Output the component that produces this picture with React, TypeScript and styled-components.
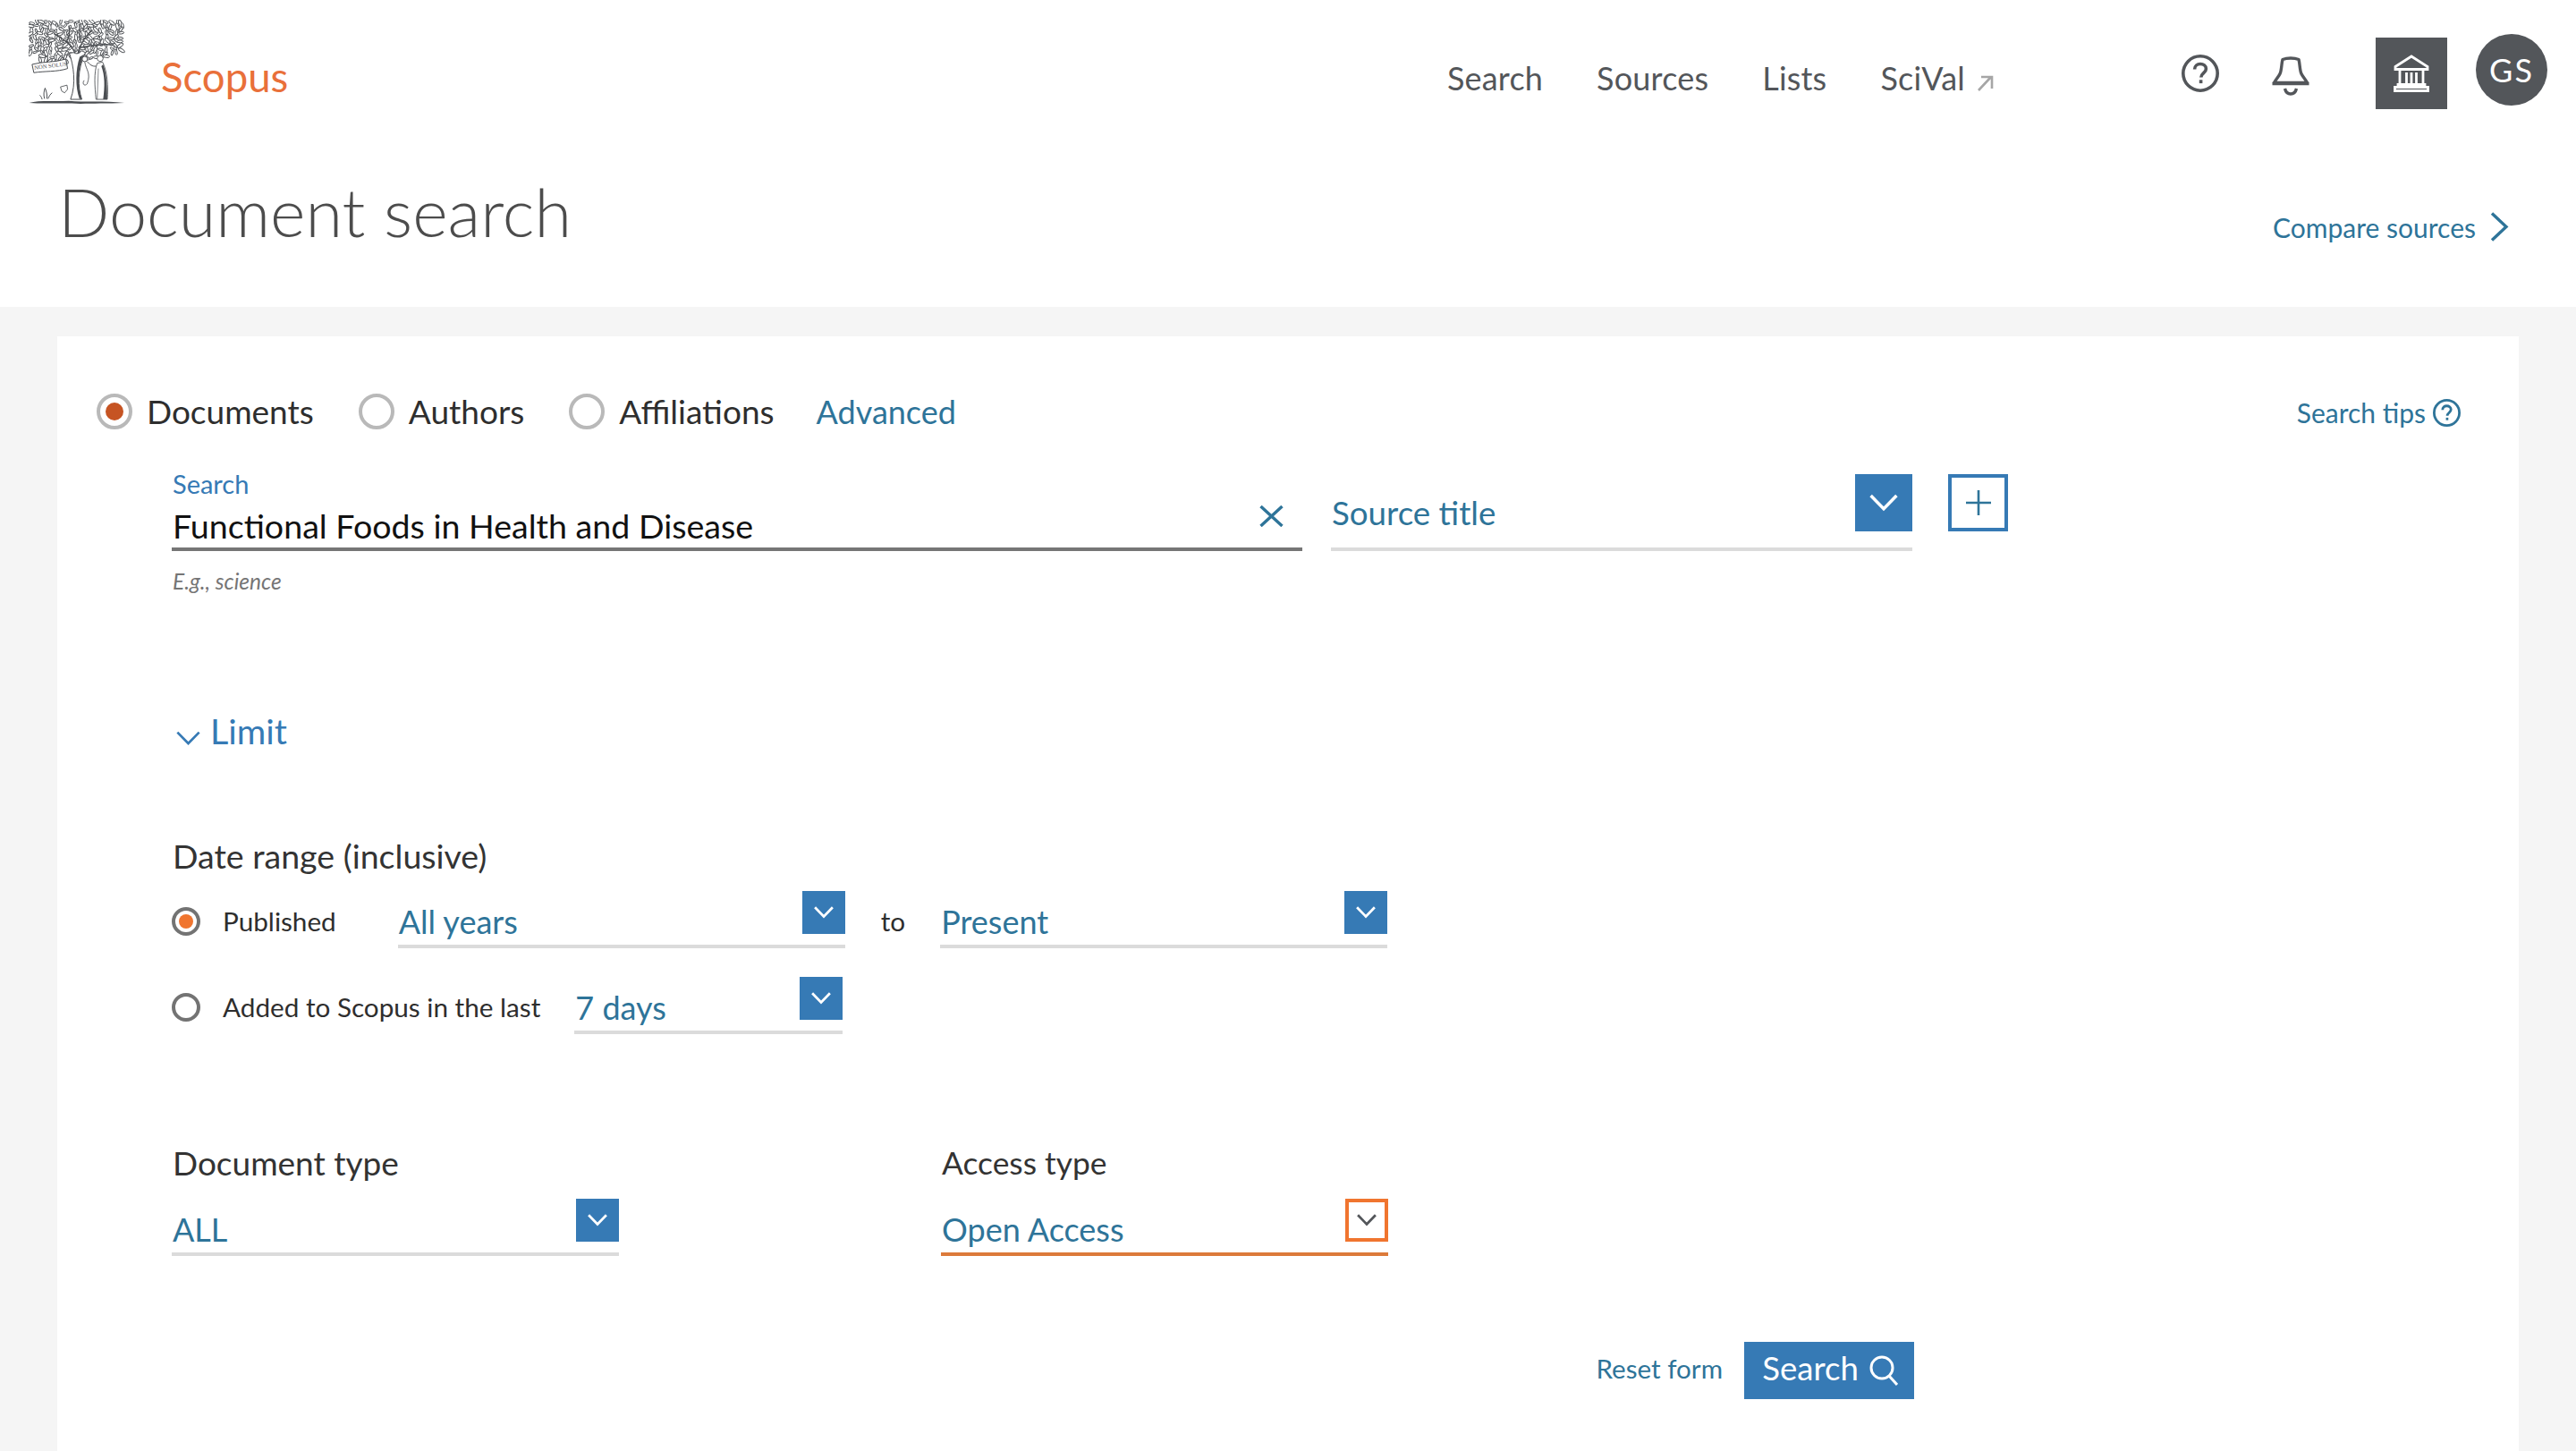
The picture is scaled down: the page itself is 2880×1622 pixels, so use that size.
import React from "react";
import styled, { createGlobalStyle } from "styled-components";

const GlobalStyle = createGlobalStyle`
  html, body { margin: 0; padding: 0; background: #f5f5f5; }
  * { box-sizing: border-box; }
  body { font-family: "Lato", "Open Sans", sans-serif; color: #2e2e2e; }
`;

const BLUE = "#367ab5";
const LINK = "#2e7499";
const ORANGE = "#f0752f";
const GREY = "#53565a";

const Page = styled.div`
  width: 2880px;
  height: 1622px;
  overflow: hidden;
  display: flex;
  flex-direction: column;
`;
const Head = styled.header`
  background: #fff;
  height: 343px;
  flex: none;
`;
const TopBar = styled.div`
  height: 160px;
  display: flex;
  align-items: flex-start;
  padding-left: 32px;
`;
const LogoSlot = styled.div`
  margin-top: 22px;
  width: 108px;
  height: 96px;
  flex: none;
`;
const Brand = styled.a`
  margin: 63px 0 0 40px;
  font-size: 45.5px;
  line-height: 46px;
  font-weight: 400;
  color: #e9703a;
`;
const Nav = styled.nav`
  margin: 69px 0 0 auto;
  display: flex;
  gap: 60px;
`;
const NavItem = styled.a`
  font-size: 36px;
  line-height: 36px;
  letter-spacing: 0.2px;
  color: ${GREY};
  display: flex;
  align-items: flex-start;
  gap: 13px;
`;
const HeadIcon = styled.span<{ $left: number; $top: number }>`
  margin: ${(p) => p.$top}px 0 0 ${(p) => p.$left}px;
  display: block;
  flex: none;
  line-height: 0;
`;
const InstBox = styled.div`
  margin: 42px 0 0 74px;
  width: 80px;
  height: 80px;
  background: ${GREY};
  display: flex;
  align-items: center;
  justify-content: center;
  flex: none;
`;
const Avatar = styled.div`
  margin: 38px 32px 0 32px;
  width: 80px;
  height: 80px;
  border-radius: 50%;
  background: ${GREY};
  color: #fff;
  font-size: 36px;
  letter-spacing: 2px;
  display: flex;
  align-items: center;
  justify-content: center;
  flex: none;
`;
const TitleRow = styled.div`
  display: flex;
  justify-content: space-between;
  align-items: flex-start;
  padding: 0 75px 0 65px;
`;
const Title = styled.h1`
  margin: 38px 0 0;
  font-size: 75.6px;
  line-height: 76px;
  font-weight: 300;
  color: #4c4c4c;
`;
const Compare = styled.a`
  margin-top: 79px;
  font-size: 30px;
  line-height: 31px;
  color: ${LINK};
  display: flex;
  align-items: flex-start;
  gap: 16px;
`;
const Panel = styled.main`
  flex: 1;
  margin: 33px 64px 0;
  background: #fff;
  padding: 64px 65px 0 44px;
`;
const Tabs = styled.div`
  display: flex;
  align-items: center;
  height: 40px;
`;
const TabRadio = styled.span<{ $on?: boolean }>`
  width: 40px;
  height: 40px;
  border-radius: 50%;
  border: 4px solid #b9b9b9;
  display: flex;
  align-items: center;
  justify-content: center;
  flex: none;
  &::after {
    content: "";
    width: 20px;
    height: 20px;
    border-radius: 50%;
    background: ${(p) => (p.$on ? "#c65423" : "transparent")};
  }
`;
const TabLabel = styled.span`
  margin: 0 50px 0 16px;
  font-size: 37px;
  line-height: 40px;
  color: #2e2e2e;
`;
const LinkLarge = styled.a`
  margin-left: -3px;
  font-size: 36px;
  line-height: 40px;
  color: ${LINK};
`;
const Tips = styled.a`
  margin-left: auto;
  padding-top: 2px;
  display: flex;
  align-items: center;
  gap: 8px;
  font-size: 30px;
  line-height: 40px;
  color: ${LINK};
`;
const Form = styled.div`
  margin-left: 84px;
`;
const SearchRow = styled.div`
  margin-top: 50px;
  display: flex;
  align-items: flex-start;
`;
const MainField = styled.div`
  width: 1264px;
  height: 86px;
  border-bottom: 4px solid #767676;
`;
const FieldLabel = styled.label`
  display: block;
  padding-left: 1px;
  font-size: 29px;
  line-height: 22px;
  color: ${BLUE};
`;
const ValueRow = styled.div`
  margin-top: 9px;
  padding-left: 1px;
  display: flex;
  justify-content: space-between;
  align-items: flex-start;
`;
const InputValue = styled.span`
  margin-top: 2px;
  font-size: 37.6px;
  line-height: 49px;
  color: #111;
`;
const ClearIcon = styled.span`
  margin: 4px 21px 0 0;
  line-height: 0;
`;
const Select = styled.div<{ $w: number; $tall?: boolean; $accent?: boolean }>`
  width: ${(p) => p.$w}px;
  height: ${(p) => (p.$tall ? 86 : 64)}px;
  border-bottom: 4px solid ${(p) => (p.$accent ? "#dc7a3a" : "#dbdbdb")};
  display: flex;
  justify-content: space-between;
  align-items: flex-start;
  flex: none;
`;
const SelectValue = styled.span<{ $tall?: boolean }>`
  margin-top: ${(p) => (p.$tall ? 25 : 16)}px;
  padding-left: 1px;
  font-size: ${(p) => (p.$tall ? 36.7 : 36)}px;
  line-height: 36px;
  color: ${LINK};
`;
const DropButton = styled.span<{ $big?: boolean; $focus?: boolean }>`
  width: ${(p) => (p.$big ? 64 : 48)}px;
  height: ${(p) => (p.$big ? 64 : 48)}px;
  background: ${(p) => (p.$focus ? "#fff" : BLUE)};
  border: ${(p) => (p.$focus ? `4px solid ${ORANGE}` : "none")};
  display: flex;
  align-items: center;
  justify-content: center;
  flex: none;
`;
const SourceSlot = styled.div`
  margin-left: 32px;
`;
const PlusBox = styled.span`
  margin-left: 40px;
  width: 67px;
  height: 64px;
  border: 4px solid ${BLUE};
  display: flex;
  align-items: center;
  justify-content: center;
  flex: none;
`;
const Hint = styled.div`
  margin-top: 23px;
  padding-left: 1px;
  font-size: 24.5px;
  line-height: 22px;
  font-style: italic;
  color: #757575;
`;
const LimitToggle = styled.a`
  margin-top: 138px;
  padding-left: 5px;
  display: flex;
  align-items: flex-start;
  gap: 11px;
  font-size: 39.5px;
  line-height: 36px;
  color: ${BLUE};
`;
const LimitChevron = styled.span`
  margin-top: 18px;
  line-height: 0;
`;
const SectionLabel = styled.div<{ $top: number; $size: number }>`
  margin-top: ${(p) => p.$top}px;
  padding-left: 1px;
  font-size: ${(p) => p.$size}px;
  line-height: 34px;
  color: #333;
`;
const DateRow = styled.div<{ $top: number }>`
  margin-top: ${(p) => p.$top}px;
  display: flex;
  align-items: flex-start;
`;
const SmallRadio = styled.span<{ $on?: boolean }>`
  margin-top: 18px;
  width: 32px;
  height: 32px;
  border-radius: 50%;
  border: 4px solid #737373;
  display: flex;
  align-items: center;
  justify-content: center;
  flex: none;
  &::after {
    content: "";
    width: 16px;
    height: 16px;
    border-radius: 50%;
    background: ${(p) => (p.$on ? ORANGE : "transparent")};
  }
`;
const DateText = styled.span<{ $after: number; $before?: number }>`
  margin: 18px ${(p) => p.$after}px 0 ${(p) => p.$before ?? 25}px;
  font-size: 29.7px;
  line-height: 32px;
  color: #2e2e2e;
`;
const TypeGrid = styled.div`
  margin-top: 127px;
  display: grid;
  grid-template-columns: 500px 500px;
  column-gap: 360px;
  width: 1360px;
`;
const TypeCell = styled.div``;
const TypeSelect = styled.div`
  margin-top: 23px;
`;
const Actions = styled.div`
  margin-top: 96px;
  width: 1948px;
  display: flex;
  justify-content: flex-end;
  align-items: center;
  gap: 24px;
`;
const ResetLink = styled.a`
  font-size: 29.6px;
  line-height: 60px;
  margin-bottom: 4px;
  color: ${LINK};
`;
const SubmitButton = styled.button`
  width: 190px;
  height: 64px;
  border: 0;
  padding: 0;
  background: ${BLUE};
  color: #fff;
  font-family: inherit;
  font-size: 36.6px;
  display: flex;
  align-items: center;
  justify-content: center;
  gap: 12px;
`;
const SubmitLabel = styled.span`
  margin: -6px 0 0 2px;
`;

const Chevron = ({ size = 22, color = "#fff", sw = 2.5 }: { size?: number; color?: string; sw?: number }) => (
  <svg width={size} height={size * 0.6} viewBox="0 0 20 12" fill="none">
    <path d="M1 1.2 L10 10.4 L19 1.2" stroke={color} strokeWidth={sw} />
  </svg>
);

const HelpIcon = ({ size, color, sw }: { size: number; color: string; sw: number }) => (
  <svg width={size} height={size} viewBox="0 0 42 42" fill="none">
    <circle cx="21" cy="21" r={21 - sw / 2} stroke={color} strokeWidth={sw} />
    <path d="M14.6 16.5c0-4 3-6 6.4-6s6.4 2 6.4 5.4c0 4.6-5.6 4.8-5.6 9.6" stroke={color} strokeWidth={sw} />
    <rect x="19.8" y="28.3" width="3.6" height="3.8" fill={color} />
  </svg>
);

const BellIcon = () => (
  <svg width="42" height="44" viewBox="0 0 42 44" fill="none">
    <path
      d="M12 3.500c5-2 13-2 18 0 1.400 5 1 12 3 16 1.400 3 4.500 6 6.500 10H2.500c2-4 5.100-7 6.500-10 2-4 1.600-11 3-16Z"
      stroke={GREY}
      strokeWidth="3.400"
      strokeLinejoin="round"
    />
    <path d="M0.500 30.500h41" stroke={GREY} strokeWidth="3.600" />
    <path d="M14.500 36c1 4 3.500 6 6.500 6s5.500-2 6.500-6" stroke={GREY} strokeWidth="3.400" />
  </svg>
);

const InstitutionIcon = () => (
  <svg width="40" height="42" viewBox="0 0 40 42" fill="none" stroke="#fff" strokeWidth="2.800">
    <path d="M2 13.500 20 2l18 11.500v3H2Z" />
    <path d="M7 16.500v17M14.500 20v13.500M20 20v13.500M25.500 20v13.500M33 16.500v17" />
    <path d="M5 33.500h30v3H5ZM1.500 36.500h37v4h-37Z" />
  </svg>
);

const ExternalArrow = () => (
  <svg width="20" height="18" viewBox="0 0 20 18" fill="none" stroke="#a6a6a6" strokeWidth="2.600" style={{ marginTop: 15 }}>
    <path d="M2 17 16 2M5 2h12v13" />
  </svg>
);

const RightChevron = () => (
  <svg width="21" height="33" viewBox="0 0 21 33" fill="none" style={{ marginTop: -2 }}>
    <path d="M2 1.500 18 16.500 2 31.500" stroke={LINK} strokeWidth="3.400" />
  </svg>
);

const CrossIcon = () => (
  <svg width="27" height="24" viewBox="0 0 27 24" fill="none">
    <path d="M1.500 1 25.500 23M25.500 1 1.500 23" stroke={LINK} strokeWidth="3.400" />
  </svg>
);

const PlusIcon = () => (
  <svg width="28" height="28" viewBox="0 0 28 28" fill="none">
    <path d="M14 0v28M0 14h28" stroke={LINK} strokeWidth="2.600" />
  </svg>
);

const SearchGlyph = () => (
  <svg width="32" height="36" viewBox="0 0 32 36" fill="none" stroke="#fff" strokeWidth="3">
    <circle cx="14" cy="15" r="12" />
    <path d="M22 24 31 34" />
  </svg>
);

// A deterministic scatter of small leaves that reads as the engraved tree.
const leaves = (() => {
  const out: { x: number; y: number; r: number; l: number }[] = [];
  let seed = 17;
  const rnd = () => {
    seed = (seed * 9301 + 49297) % 233280;
    return seed / 233280;
  };
  for (let y = 44; y <= 176; y += 13) {
    for (let x = 42; x <= 356; x += 17) {
      const px = x + (rnd() - 0.5) * 9;
      const py = y + (rnd() - 0.5) * 8;
      if (py > 148 && (px < 70 || px > 300)) continue;
      if (py > 165 && px > 170) continue;
      out.push({ x: px, y: py, r: rnd() * 180, l: 7 + rnd() * 5 });
    }
  }
  return out;
})();

const TreeLogo = () => (
  <svg width="108" height="96" viewBox="35 35 325 290" fill="none">
    {leaves.map((f, i) => (
      <ellipse
        key={i}
        cx={f.x}
        cy={f.y}
        rx={f.l}
        ry={f.l * 0.42}
        transform={`rotate(${f.r} ${f.x} ${f.y})`}
        fill="#fff"
        stroke="#4b4e52"
        strokeWidth="2.800"
      />
    ))}
    <path
      d="M192 165 C196 140 170 110 120 82 M200 165 C205 130 215 100 250 70 M205 130 C235 125 270 115 320 120 M160 112 C170 100 175 80 170 55 M210 110 C205 90 208 70 205 50"
      stroke="#4b4e52"
      strokeWidth="4"
    />
    <path d="M172 148 C186 190 196 250 176 304 L214 304 C200 262 198 205 226 146 L214 140 C205 150 196 152 186 146 Z" fill="#fff" stroke="#4b4e52" strokeWidth="3" />
    <path d="M207 160 C192 205 192 262 206 302 L214 304 C200 262 198 205 222 152 Z" fill="#4b4e52" />
    <path d="M46 186 C80 176 124 180 160 168 L166 200 C130 212 88 208 52 214 Z" fill="#fff" stroke="#4b4e52" strokeWidth="3" />
    <text
      x="54"
      y="204"
      fontSize="20"
      fontFamily="Liberation Serif, serif"
      fill="#4b4e52"
      transform="rotate(-7 54 204)"
    >
      NON SOLUS
    </text>
    <circle cx="224" cy="168" r="9" fill="#fff" stroke="#4b4e52" strokeWidth="3" />
    <path d="M224 178 C228 205 246 214 232 252 C222 262 214 250 222 240" stroke="#4b4e52" strokeWidth="2.600" />
    <circle cx="276" cy="166" r="10" fill="#fff" stroke="#4b4e52" strokeWidth="2.600" />
    <path d="M266 182 C254 214 258 262 262 304 L300 304 C304 262 300 208 284 178 Z" fill="#fff" stroke="#4b4e52" strokeWidth="2.600" />
    <path d="M286 186 C298 214 300 262 300 304 L286 304 C292 262 292 222 280 192 Z" fill="#4b4e52" />
    <path d="M262 192 C250 194 240 186 232 176" stroke="#4b4e52" strokeWidth="3" />
    <path d="M270 200 L266 304" stroke="#4b4e52" strokeWidth="2" />
    <path d="M88 302 C84 288 86 276 90 266 C94 276 98 288 96 302 M100 302 C104 292 108 286 114 282 M80 304 C78 297 76 294 72 290" stroke="#4b4e52" strokeWidth="3" />
    <path d="M142 262 L164 256 L166 270 L156 282 L146 276 Z" fill="#fff" stroke="#4b4e52" strokeWidth="2.600" />
    <path d="M36 316 C70 306 120 312 170 309 C220 314 290 308 358 316 C300 319 250 317 210 319 C150 315 90 320 36 316 Z" fill="#4b4e52" />
  </svg>
);

const App = () => (
  <>
    <GlobalStyle />
    <Page>
      <Head>
        <TopBar>
          <LogoSlot>
            <TreeLogo />
          </LogoSlot>
          <Brand>Scopus</Brand>
          <Nav>
            <NavItem>Search</NavItem>
            <NavItem>Sources</NavItem>
            <NavItem>Lists</NavItem>
            <NavItem>
              SciVal
              <ExternalArrow />
            </NavItem>
          </Nav>
          <HeadIcon $left={209} $top={61}>
            <HelpIcon size={42} color={GREY} sw={3.600} />
          </HeadIcon>
          <HeadIcon $left={59} $top={63}>
            <BellIcon />
          </HeadIcon>
          <InstBox>
            <InstitutionIcon />
          </InstBox>
          <Avatar>GS</Avatar>
        </TopBar>
        <TitleRow>
          <Title>Document search</Title>
          <Compare>
            Compare sources
            <RightChevron />
          </Compare>
        </TitleRow>
      </Head>
      <Panel>
        <Tabs>
          <TabRadio $on />
          <TabLabel>Documents</TabLabel>
          <TabRadio />
          <TabLabel>Authors</TabLabel>
          <TabRadio />
          <TabLabel>Affiliations</TabLabel>
          <LinkLarge>Advanced</LinkLarge>
          <Tips>
            Search tips
            <HelpIcon size={31} color={LINK} sw={3.800} />
          </Tips>
        </Tabs>
        <Form>
          <SearchRow>
            <MainField>
              <FieldLabel>Search</FieldLabel>
              <ValueRow>
                <InputValue>Functional Foods in Health and Disease</InputValue>
                <ClearIcon>
                  <CrossIcon />
                </ClearIcon>
              </ValueRow>
            </MainField>
            <SourceSlot>
              <Select $w={650} $tall>
                <SelectValue $tall>Source title</SelectValue>
                <DropButton $big>
                  <Chevron size={32} sw={2.200} />
                </DropButton>
              </Select>
            </SourceSlot>
            <PlusBox>
              <PlusIcon />
            </PlusBox>
          </SearchRow>
          <Hint>E.g., science</Hint>
          <LimitToggle>
            <LimitChevron>
              <Chevron size={27} color={BLUE} sw={2} />
            </LimitChevron>
            Limit
          </LimitToggle>
          <SectionLabel $top={105} $size={37.5}>Date range (inclusive)</SectionLabel>
          <DateRow $top={22}>
            <SmallRadio $on />
            <DateText $after={69}>Published</DateText>
            <Select $w={500}>
              <SelectValue>All years</SelectValue>
              <DropButton>
                <Chevron size={22} />
              </DropButton>
            </Select>
            <DateText $before={40} $after={39}>to</DateText>
            <Select $w={500}>
              <SelectValue>Present</SelectValue>
              <DropButton>
                <Chevron size={22} />
              </DropButton>
            </Select>
          </DateRow>
          <DateRow $top={32}>
            <SmallRadio />
            <DateText $after={38}>Added to Scopus in the last</DateText>
            <Select $w={300}>
              <SelectValue>7 days</SelectValue>
              <DropButton>
                <Chevron size={22} />
              </DropButton>
            </Select>
          </DateRow>
          <TypeGrid>
            <TypeCell>
              <SectionLabel $top={0} $size={37}>Document type</SectionLabel>
              <TypeSelect>
                <Select $w={500}>
                  <SelectValue>ALL</SelectValue>
                  <DropButton>
                    <Chevron size={22} />
                  </DropButton>
                </Select>
              </TypeSelect>
            </TypeCell>
            <TypeCell>
              <SectionLabel $top={0} $size={35.4}>Access type</SectionLabel>
              <TypeSelect>
                <Select $w={500} $accent>
                  <SelectValue>Open Access</SelectValue>
                  <DropButton $focus>
                    <Chevron size={22} color={GREY} />
                  </DropButton>
                </Select>
              </TypeSelect>
            </TypeCell>
          </TypeGrid>
          <Actions>
            <ResetLink>Reset form</ResetLink>
            <SubmitButton>
              <SubmitLabel>Search</SubmitLabel>
              <SearchGlyph />
            </SubmitButton>
          </Actions>
        </Form>
      </Panel>
    </Page>
  </>
);

export default App;
